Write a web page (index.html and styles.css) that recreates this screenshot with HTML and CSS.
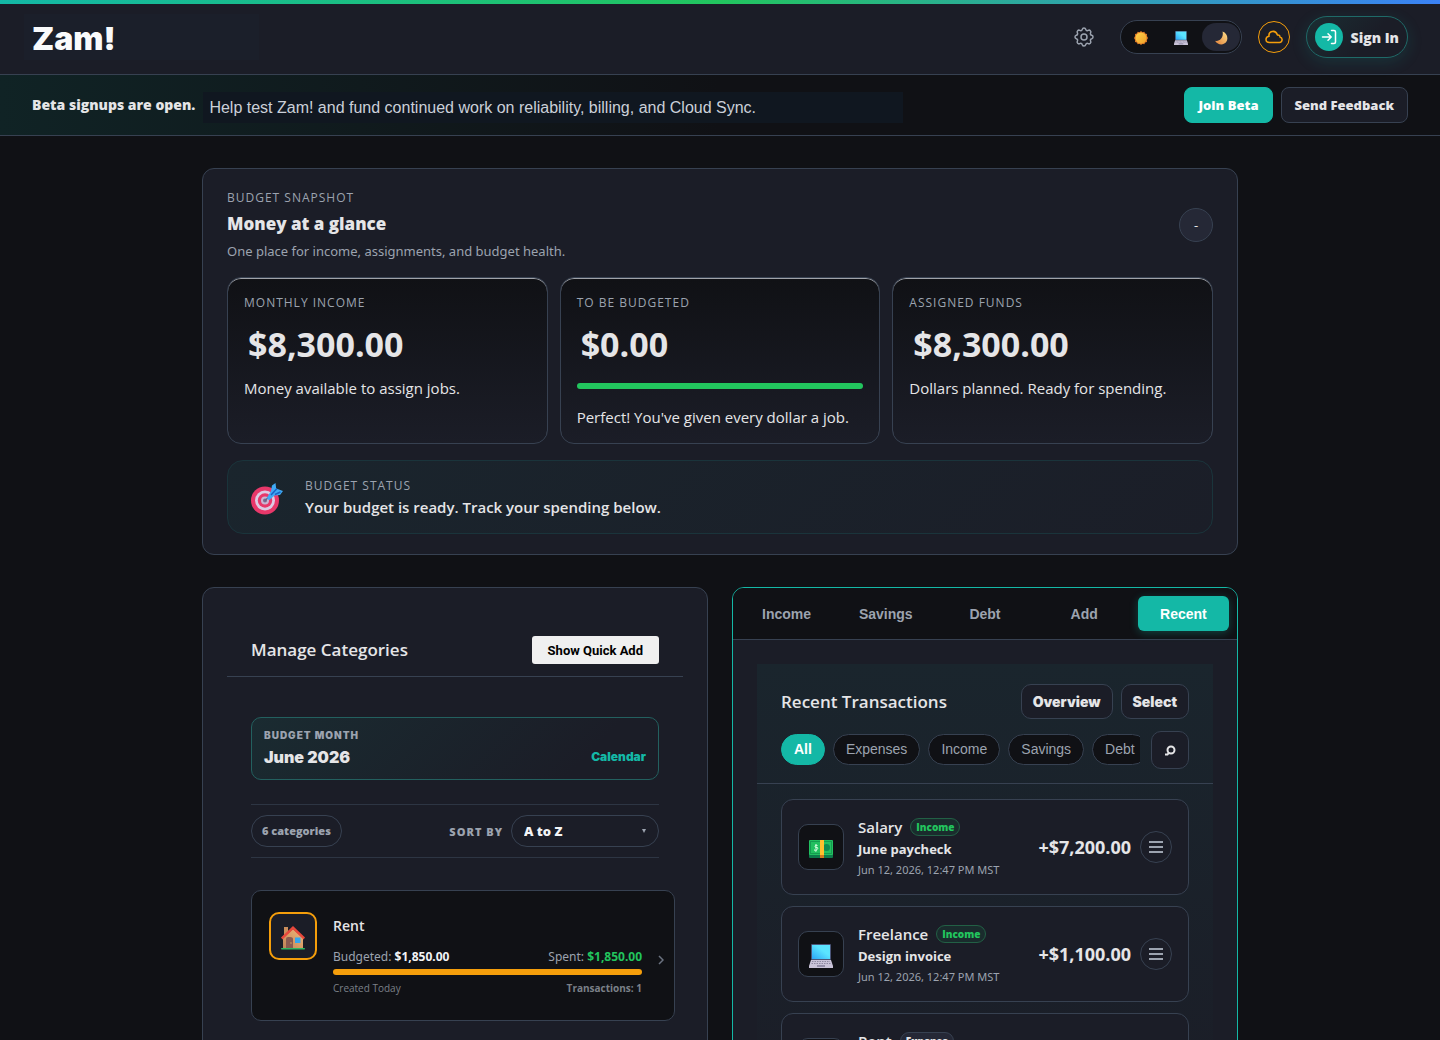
FILE: index.html
```html
<!DOCTYPE html>
<html lang="en">

<head>
    <meta charset="UTF-8">
    <meta name="viewport" content="width=device-width, initial-scale=1.0">
    <title>Zam!</title>
    <link rel="stylesheet" href="styles.css">
</head>

<body>
    <!-- shared icons -->
    <svg class="icon-defs" width="0" height="0" aria-hidden="true">
        <defs>
            <linearGradient id="screenFill" x1="1" y1="0" x2="0" y2="1">
                <stop offset="0.4" stop-color="#5be4ff" />
                <stop offset="1" stop-color="#2ba4f5" />
            </linearGradient>
            <linearGradient id="sunFill" x1="0" y1="0" x2="1" y2="1">
                <stop offset="0" stop-color="#ffd24a" />
                <stop offset="1" stop-color="#f0a028" />
            </linearGradient>
            <linearGradient id="moonFill" x1="1" y1="0" x2="0" y2="1">
                <stop offset="0" stop-color="#ffe08a" />
                <stop offset="1" stop-color="#e0803a" />
            </linearGradient>
            <linearGradient id="wallFill" x1="1" y1="0" x2="0" y2="1">
                <stop offset="0" stop-color="#f0b878" />
                <stop offset="1" stop-color="#c08458" />
            </linearGradient>
            <symbol id="laptop" viewBox="0 0 24 24">
                <rect x="2" y="0" width="20" height="16" rx="1" fill="#4a5578" />
                <rect x="3" y="1" width="18" height="14" fill="url(#screenFill)" />
                <path d="M2 16h20l2 6v2H0v-2z" fill="#c9c3d8" />
                <path d="M3 17.500h18M2.500 19.500h19" stroke="#8d88a0" stroke-width="1" stroke-dasharray="1.500 1" />
                <rect x="8" y="21" width="8" height="2" fill="#938ea8" />
            </symbol>
            <symbol id="house" viewBox="0 0 24 24">
                <rect x="3" y="1" width="4" height="9" fill="#c98e5c" />
                <path d="M2 12 12 3l10 9v10H2z" fill="url(#wallFill)" />
                <path d="M12 0 24 11.500 22.500 13.500 12 3.500 1.500 13.500 0 11.500z" fill="#e8483c" />
                <path d="M5 22v-9q0-2 2-2h2q3 0 3 2v9z" fill="#8b5a50" />
                <circle cx="10" cy="17" r="0.700" fill="#e0b060" />
                <rect x="14" y="11.500" width="5.500" height="5.500" fill="#35a6ee" />
                <rect x="0" y="22" width="24" height="1.500" rx="0.700" fill="#2fb560" />
            </symbol>
            <symbol id="cash" viewBox="0 0 24 18">
                <rect x="0" y="2" width="24" height="16" rx="1" fill="#0c7a4a" />
                <rect x="0" y="0" width="24" height="15" rx="1" fill="#22c060" />
                <rect x="1.500" y="1.500" width="21" height="12" fill="none" stroke="#159c50" />
                <circle cx="17.500" cy="7.500" r="3.500" fill="#0f8a50" />
                <path d="M8.500 5.500q-2.500-1-2.500.700t2 1.400-.200 2.200-2.300-.300M7 4v7.500" fill="none" stroke="#d5ffe0" />
                <rect x="11" y="0" width="4" height="15" fill="#ffc02e" />
                <rect x="11" y="15" width="4" height="3" fill="#d07a20" />
            </symbol>
            <symbol id="menu" viewBox="0 0 14 12">
                <path d="M0.500 1h13M0.500 6h13M0.500 11h13" stroke="currentColor" stroke-width="2" stroke-linecap="round" />
            </symbol>
        </defs>
    </svg>

    <div class="top-stripe"></div>

    <header class="header">
        <div class="brand">Zam!</div>
        <div class="header-actions">
            <button class="settings-button" aria-label="Settings">
                <svg width="24" height="24" viewBox="0 0 24 24" fill="none" stroke="currentColor" stroke-width="1.500" stroke-linejoin="round">
                    <circle cx="12" cy="12" r="3" />
                    <path d="M10.300 4.300c.400-1.750 2.900-1.750 3.400 0a1.700 1.700 0 0 0 2.500 1.100c1.600-.900 3.300.800 2.400 2.400a1.700 1.700 0 0 0 1.100 2.500c1.750.400 1.750 2.900 0 3.400a1.700 1.700 0 0 0-1.100 2.500c.900 1.600-.800 3.300-2.400 2.400a1.700 1.700 0 0 0-2.500 1.100c-.400 1.750-2.900 1.750-3.400 0a1.700 1.700 0 0 0-2.500-1.100c-1.600.900-3.300-.800-2.400-2.400a1.700 1.700 0 0 0-1.100-2.500c-1.750-.400-1.750-2.900 0-3.400a1.700 1.700 0 0 0 1.100-2.500c-.900-1.600.800-3.300 2.400-2.400a1.700 1.700 0 0 0 2.500-1.100z" />
                </svg>
            </button>
            <div class="theme-switch">
                <button aria-label="Light">
                    <svg width="14" height="14" viewBox="0 0 14 14">
                        <path d="M7 0l1.500 1.200L10.300.800l.900 1.700 1.800.600-.100 2L14 7l-1.100 1.900.100 2-1.800.600-.900 1.700-1.800-.400L7 14l-1.500-1.200-1.800.400-.900-1.700L1 10.900l.100-2L0 7l1.100-1.900-.100-2 1.800-.600.900-1.700 1.800.400z" fill="#e07a28" />
                        <circle cx="7" cy="7" r="5.500" fill="url(#sunFill)" />
                    </svg>
                </button>
                <button aria-label="System"><svg width="14" height="14"><use href="#laptop" /></svg></button>
                <button class="selected" aria-label="Dark">
                    <svg width="14" height="14" viewBox="0 0 14 14">
                        <path d="M8.500.500C13 2 14.500 7 12.500 10.500S4.500 15 1 9.800c5 1.200 9-3.800 7.500-9.300z" fill="url(#moonFill)" />
                    </svg>
                </button>
            </div>
            <button class="cloud-button" aria-label="Cloud Sync">
                <svg width="18" height="14" viewBox="0 0 18 14" fill="none" stroke="currentColor" stroke-width="1.500">
                    <path d="M4.500 12.500h10a2.800 2.800 0 0 0 .500-5.500C15 5.500 14 4.800 12.500 5 11.500 2.500 9.500 1 7.300 1.500 5 2 3.700 4 4 6.200 2 6.500 1 8 1 9.500c0 1.700 1.500 3 3.500 3z" />
                </svg>
            </button>
            <button class="sign-in-button">
                <span class="sign-in-icon">
                    <svg width="16" height="16" viewBox="0 0 16 16" fill="none" stroke="currentColor" stroke-width="1.500" stroke-linecap="round" stroke-linejoin="round">
                        <path d="M1.500 8h8.500M7 4.800 10.200 8 7 11.200M10.500 1.500H13q1.500 0 1.500 1.500v10q0 1.500-1.500 1.500h-2.500" />
                    </svg>
                </span>
                Sign In
            </button>
        </div>
    </header>

    <div class="beta-banner">
        <div class="beta-text">
            <strong>Beta signups are open.</strong>
            <span>Help test Zam! and fund continued work on reliability, billing, and Cloud Sync.</span>
        </div>
        <div class="beta-actions">
            <button class="join-button">Join Beta</button>
            <button class="feedback-button">Send Feedback</button>
        </div>
    </div>

    <main class="container">
        <section class="panel snapshot">
            <div class="snapshot-header">
                <div>
                    <div class="eyebrow">Budget Snapshot</div>
                    <h2>Money at a glance</h2>
                    <p>One place for income, assignments, and budget health.</p>
                </div>
                <button class="collapse-button" aria-label="Collapse">-</button>
            </div>

            <div class="stats">
                <div class="stat">
                    <div class="eyebrow">Monthly Income</div>
                    <div class="stat-value">$8,300.00</div>
                    <p>Money available to assign jobs.</p>
                </div>
                <div class="stat">
                    <div class="eyebrow">To Be Budgeted</div>
                    <div class="stat-value">$0.00</div>
                    <div class="stat-bar"></div>
                    <p>Perfect! You've given every dollar a job.</p>
                </div>
                <div class="stat">
                    <div class="eyebrow">Assigned Funds</div>
                    <div class="stat-value">$8,300.00</div>
                    <p>Dollars planned. Ready for spending.</p>
                </div>
            </div>

            <div class="status">
                <svg width="32" height="32" viewBox="0 0 32 32">
                    <circle cx="14" cy="17.500" r="14" fill="#e8386a" />
                    <circle cx="14" cy="17.500" r="10" fill="#dccbe4" />
                    <circle cx="14" cy="17.500" r="7.200" fill="#e8386a" />
                    <circle cx="14" cy="17.500" r="4" fill="#c9b6d4" />
                    <circle cx="14" cy="17.500" r="2" fill="#7c6b92" />
                    <path d="M14 17.500 20 12" stroke="#5a6a90" stroke-width="1.500" />
                    <path d="M16 14.500 20 8l1-5.500L24.500 0l.700 5.500L32 8l-3 4-5.500.500-5 4.500q-2 0-2.500-2.500z" fill="#3fa9f5" />
                    <path d="M20 12l6-6.500M24 11.500l5.500-2.500" stroke="#1b62c4" stroke-width="1.500" />
                </svg>
                <div>
                    <div class="eyebrow">Budget Status</div>
                    <div class="status-text">Your budget is ready. Track your spending below.</div>
                </div>
            </div>
        </section>

        <div class="columns">
            <section class="panel categories">
                <div class="categories-header">
                    <h3>Manage Categories</h3>
                    <button class="quick-add-button">Show Quick Add</button>
                </div>

                <div class="categories-body">
                    <button class="month-button">
                        <span>
                            <span class="month-label">Budget Month</span>
                            <span class="month-name">June 2026</span>
                        </span>
                        <span class="month-link">Calendar</span>
                    </button>

                    <div class="sort-row">
                        <span class="count-pill">6 categories</span>
                        <div class="sort">
                            <label for="sortBy">Sort by</label>
                            <div class="select-wrap">
                                <select id="sortBy">
                                    <option>A to Z</option>
                                    <option>Z to A</option>
                                </select>
                                <svg width="4" height="4" viewBox="0 0 4 4"><path d="M0 0h4L2 4z" fill="#9ca3af" /></svg>
                            </div>
                        </div>
                    </div>

                    <div class="category-card">
                        <div class="category-icon"><svg width="24" height="24"><use href="#house" /></svg></div>
                        <div class="category-info">
                            <h4>Rent</h4>
                            <div class="category-amounts">
                                <span>Budgeted: <b>$1,850.00</b></span>
                                <span>Spent: <b class="green">$1,850.00</b></span>
                            </div>
                            <div class="category-bar"></div>
                            <div class="category-meta">
                                <span>Created Today</span>
                                <b>Transactions: 1</b>
                            </div>
                        </div>
                        <svg class="chevron" width="6" height="10" viewBox="0 0 6 10" fill="none" stroke="currentColor" stroke-width="1.500"><path d="M1 1l4 4-4 4" /></svg>
                    </div>
                </div>
            </section>

            <section class="panel activity">
                <nav class="tabs">
                    <button>Income</button>
                    <button>Savings</button>
                    <button>Debt</button>
                    <button>Add</button>
                    <button class="selected">Recent</button>
                </nav>

                <div class="recent">
                    <div class="recent-header">
                        <div class="recent-title">
                            <h3>Recent Transactions</h3>
                            <div class="recent-actions">
                                <button>Overview</button>
                                <button>Select</button>
                            </div>
                        </div>
                        <div class="filter-row">
                            <div class="chips">
                                <button class="selected">All</button>
                                <button>Expenses</button>
                                <button>Income</button>
                                <button>Savings</button>
                                <button>Debt</button>
                            </div>
                            <button class="search-button" aria-label="Search">
                                <svg width="12" height="12" viewBox="0 0 12 12" fill="none" stroke="currentColor" stroke-width="2">
                                    <circle cx="7" cy="6" r="3.500" />
                                    <path d="M5 8.500 3.500 10.500H1" />
                                </svg>
                            </button>
                        </div>
                    </div>

                    <div class="transactions">
                        <div class="transaction">
                            <div class="transaction-icon"><svg width="24" height="18"><use href="#cash" /></svg></div>
                            <div class="transaction-info">
                                <div class="transaction-name">Salary <span class="badge income">Income</span></div>
                                <div class="transaction-note">June paycheck</div>
                                <div class="transaction-date">Jun 12, 2026, 12:47 PM MST</div>
                            </div>
                            <div class="amount">+$7,200.00</div>
                            <button class="menu-button" aria-label="Actions"><svg width="14" height="12"><use href="#menu" /></svg></button>
                        </div>
                        <div class="transaction">
                            <div class="transaction-icon"><svg width="24" height="24"><use href="#laptop" /></svg></div>
                            <div class="transaction-info">
                                <div class="transaction-name">Freelance <span class="badge income">Income</span></div>
                                <div class="transaction-note">Design invoice</div>
                                <div class="transaction-date">Jun 12, 2026, 12:47 PM MST</div>
                            </div>
                            <div class="amount">+$1,100.00</div>
                            <button class="menu-button" aria-label="Actions"><svg width="14" height="12"><use href="#menu" /></svg></button>
                        </div>
                        <div class="transaction">
                            <div class="transaction-icon"><svg width="24" height="24"><use href="#house" /></svg></div>
                            <div class="transaction-info">
                                <div class="transaction-name">Rent <span class="badge">Expense</span></div>
                                <div class="transaction-note">June rent</div>
                                <div class="transaction-date">Jun 12, 2026, 12:47 PM MST</div>
                            </div>
                            <div class="amount">-$1,850.00</div>
                            <button class="menu-button" aria-label="Actions"><svg width="14" height="12"><use href="#menu" /></svg></button>
                        </div>
                    </div>
                </div>
            </section>
        </div>
    </main>
</body>

</html>
```
FILE: styles.css
```css
* {
    box-sizing: border-box;
}

html {
    scrollbar-width: none;
}

body {
    margin: 0;
    background-color: #101115;
    color: #e5e5e7;
    font-family: 'Open Sans', 'Noto Sans', sans-serif;
    font-size: 15px;
}

h2,
h3,
h4,
p {
    margin: 0;
}

button {
    font-family: inherit;
    color: inherit;
    margin: 0;
    padding: 0;
    cursor: pointer;
}

svg {
    display: block;
    flex: none;
}

.icon-defs {
    position: absolute;
}

.top-stripe {
    position: absolute;
    top: 0;
    left: 0;
    right: 0;
    height: 4px;
    background: linear-gradient(90deg, #14b8a6, #22c55e, #3b82f6);
}

/* Header */
.header {
    display: flex;
    justify-content: space-between;
    align-items: center;
    padding: 16px 32px 16px 24px;
    background-color: #1b1d27;
    border-bottom: 1px solid #374151;
}

.brand {
    width: 235px;
    padding: 4px 8px 0;
    background-color: #1b1f2a;
    color: #f9fafb;
    font-family: Inter, sans-serif;
    font-size: 32px;
    font-weight: 900;
    line-height: 42px;
    margin: -2px 0;
}

.header-actions {
    display: flex;
    align-items: center;
    gap: 16px;
}

.settings-button {
    display: flex;
    justify-content: center;
    align-items: center;
    width: 40px;
    height: 40px;
    background: none;
    border: none;
    color: #9ca3af;
}

.theme-switch {
    display: flex;
    gap: 2px;
    padding: 2px 1px;
    background-color: #101115;
    border: 1px solid #374151;
    border-radius: 17px;
}

.theme-switch button {
    display: flex;
    justify-content: center;
    align-items: center;
    width: 38px;
    height: 28px;
    padding-top: 2px;
    background: none;
    border: none;
    border-radius: 14px;
}

.theme-switch .selected {
    background-color: #252836;
}

.cloud-button {
    display: flex;
    justify-content: center;
    align-items: center;
    width: 32px;
    height: 32px;
    background: none;
    border: 1px solid #f59e0b;
    border-radius: 50%;
    color: #f59e0b;
}

.sign-in-button {
    display: flex;
    align-items: center;
    gap: 8px;
    height: 42px;
    padding: 0 8px;
    background: linear-gradient(135deg, #1a2e33, #1b1d27 60%);
    border: 1px solid #1f6a68;
    border-radius: 21px;
    box-shadow: 0 4px 16px rgba(20, 184, 166, 0.15);
    font-size: 14px;
    font-weight: 800;
}

.sign-in-icon {
    display: flex;
    justify-content: center;
    align-items: center;
    width: 28px;
    height: 28px;
    background-color: #14b8a6;
    border-radius: 50%;
    color: #fff;
}

/* Beta banner */
.beta-banner {
    display: flex;
    justify-content: space-between;
    align-items: flex-end;
    padding: 12px 32px;
    background: linear-gradient(90deg, #102325, #101115 50%);
    border-bottom: 1px solid #374151;
}

.beta-text {
    display: flex;
    gap: 8px;
}

.beta-text strong {
    font-size: 14px;
    font-weight: 800;
    line-height: 26px;
}

.beta-text span {
    width: 700px;
    padding: 0 6px;
    background-color: #101720;
    color: #cbd0d9;
    font-family: 'Liberation Sans', Arial, sans-serif;
    font-size: 16px;
    line-height: 31px;
}

.beta-actions {
    display: flex;
    gap: 8px;
}

.beta-actions button {
    height: 36px;
    padding: 0 13px;
    border-radius: 8px;
    font-size: 13px;
    font-weight: 800;
}

.join-button {
    background-color: #14b8a6;
    border: 1px solid #14b8a6;
    color: #fff;
}

.feedback-button {
    background-color: #1b1d27;
    border: 1px solid #374151;
}

/* Layout */
.container {
    max-width: 1100px;
    margin: 0 auto;
    padding: 32px;
}

.panel {
    background-color: #1b1d27;
    border: 1px solid #374151;
    border-radius: 12px;
}

.eyebrow {
    color: #9ca3af;
    font-size: 12px;
    line-height: 18px;
    letter-spacing: 1px;
    text-transform: uppercase;
}

/* Snapshot */
.snapshot {
    padding: 20px 24px;
}

.snapshot-header {
    display: flex;
    justify-content: space-between;
    align-items: center;
}

.snapshot-header h2 {
    margin: 3px 0;
    font-size: 17px;
    font-weight: 800;
    line-height: 28px;
}

.snapshot-header p {
    color: #9ca3af;
    font-family: 'Noto Sans', sans-serif;
    font-size: 13px;
    line-height: 20px;
}

.collapse-button {
    width: 34px;
    height: 34px;
    background-color: #252836;
    border: 1px solid #374151;
    border-radius: 50%;
    font-size: 13px;
}

.stats {
    display: grid;
    grid-template-columns: repeat(3, 1fr);
    gap: 12px;
    margin: 16px 0;
}

.stat {
    padding: 16px 16px 15px;
    background: linear-gradient(180deg, #101115, #1b1d27);
    border: 1px solid #374151;
    border-radius: 14px;
    box-shadow: inset 0 1px 0 #a0a2a8;
}

.stat-value {
    padding: 0 4px;
    margin: 10px 0 11px;
    font-size: 34px;
    font-weight: 700;
    line-height: 44px;
}

.stat-bar {
    height: 6px;
    margin: 17px 0;
    background-color: #22c55e;
    border-radius: 3px;
}

.stat p {
    line-height: 22px;
}

.status {
    display: flex;
    align-items: center;
    gap: 22px;
    padding: 16px 23px;
    background: linear-gradient(135deg, #1a252d, #1b1e28);
    border: 1px solid #1a343b;
    border-radius: 16px;
}

.status svg {
    margin-top: 4px;
}

.status-text {
    margin-top: 2px;
    font-weight: 600;
    line-height: 20px;
}

/* Columns */
.columns {
    display: grid;
    grid-template-columns: repeat(2, minmax(0, 1fr));
    gap: 24px;
    margin-top: 32px;
}

h3 {
    font-size: 17px;
    font-weight: 600;
    line-height: 28px;
}

/* Categories */
.categories {
    padding: 24px;
}

.categories-header {
    display: flex;
    justify-content: space-between;
    align-items: center;
    padding: 24px 24px 12px;
    border-bottom: 1px solid #374151;
}

.quick-add-button {
    height: 28px;
    padding: 0 16px;
    background-color: #f0f0f0;
    border: none;
    border-radius: 3px;
    color: #000;
    font-family: Roboto, sans-serif;
    font-size: 13px;
    font-weight: 700;
}

.categories-body {
    padding: 40px 24px;
}

.month-button {
    display: flex;
    justify-content: space-between;
    align-items: flex-end;
    width: 100%;
    padding: 10px 12px;
    background: linear-gradient(135deg, #1a2b31, #1b1d27 80%);
    border: 1px solid #23605f;
    border-radius: 10px;
    font-family: Inter, sans-serif;
    text-align: left;
}

.month-label {
    display: block;
    color: #9ca3af;
    font-size: 10px;
    font-weight: 900;
    line-height: 15px;
    letter-spacing: 1px;
    text-transform: uppercase;
}

.month-name {
    display: block;
    margin-top: 2px;
    font-size: 16px;
    font-weight: 900;
    line-height: 24px;
}

.month-link {
    color: #14b8a6;
    font-size: 12px;
    font-weight: 900;
    line-height: 24px;
}

.sort-row {
    display: flex;
    justify-content: space-between;
    align-items: center;
    margin: 24px 0 32px;
    padding: 10px 0;
    border-top: 1px solid #2d3543;
    border-bottom: 1px solid #2d3543;
}

.count-pill {
    padding: 0 10px;
    border: 1px solid #374151;
    border-radius: 16px;
    color: #9ca3af;
    font-size: 11px;
    font-weight: 800;
    line-height: 30px;
}

.sort {
    display: flex;
    align-items: center;
    gap: 8px;
}

.sort label {
    color: #9ca3af;
    font-size: 11px;
    font-weight: 800;
    letter-spacing: 1px;
    text-transform: uppercase;
}

.select-wrap {
    position: relative;
}

.select-wrap select {
    appearance: none;
    width: 148px;
    height: 32px;
    padding: 0 12px;
    background: none;
    border: 1px solid #374151;
    border-radius: 16px;
    color: #f3f4f6;
    font-family: inherit;
    font-size: 13px;
    font-weight: 800;
}

.select-wrap svg {
    position: absolute;
    right: 13px;
    top: 14px;
    pointer-events: none;
}

.category-card {
    display: flex;
    gap: 16px;
    margin-right: -16px;
    padding: 21px 10px 24px 17px;
    background-color: #101115;
    border: 1px solid #374151;
    border-radius: 10px;
}

.category-icon {
    display: flex;
    justify-content: center;
    align-items: center;
    flex: none;
    width: 48px;
    height: 48px;
    padding-top: 4px;
    background-color: #1b1d27;
    border: 2px solid #f59e0b;
    border-radius: 10px;
}

.category-info {
    flex: 1;
}

.category-info h4 {
    margin: 4px 0 11px;
    font-size: 14px;
    font-weight: 600;
    line-height: 20px;
}

.category-amounts {
    display: flex;
    justify-content: space-between;
    color: #9ca3af;
    font-family: 'Noto Sans', sans-serif;
    font-size: 12px;
    line-height: 20px;
}

.category-amounts b {
    color: #f3f4f6;
}

.category-amounts .green {
    color: #22c55e;
}

.category-bar {
    height: 6px;
    margin: 2px 0 5px;
    background-color: #f59e0b;
    border-radius: 3px;
}

.category-meta {
    display: flex;
    justify-content: space-between;
    color: #7b8088;
    font-size: 10px;
    line-height: 16px;
}

.chevron {
    align-self: center;
    margin-top: 12px;
    color: #6b7280;
}

/* Activity */
.activity {
    border-color: #14b8a6;
    overflow: hidden;
}

.tabs {
    display: grid;
    grid-template-columns: repeat(5, 1fr);
    gap: 8px;
    padding: 8px;
    background-color: #101115;
    border-bottom: 1px solid #374151;
}

.tabs button {
    height: 35px;
    background: none;
    border: none;
    border-radius: 6px;
    color: #9ca3af;
    font-family: 'Liberation Sans', Arial, sans-serif;
    font-size: 14px;
    font-weight: 700;
}

.tabs .selected {
    background-color: #14b8a6;
    color: #fff;
    box-shadow: 0 2px 8px rgba(20, 184, 166, 0.3);
}

.recent {
    margin: 24px;
    background: linear-gradient(180deg, #1a252d, #1b1d27);
}

.recent-header {
    padding: 20px 24px 14px;
    border-bottom: 1px solid #374151;
}

.recent-title {
    display: flex;
    justify-content: space-between;
    align-items: center;
}

.recent-actions {
    display: flex;
    gap: 8px;
}

.recent-actions button {
    height: 35px;
    padding: 0 11px;
    background-color: #1b1d27;
    border: 1px solid #374151;
    border-radius: 10px;
    font-family: Inter, sans-serif;
    font-size: 14px;
    font-weight: 900;
}

.filter-row {
    display: flex;
    align-items: center;
    gap: 11px;
    margin-top: 12px;
}

.chips {
    display: flex;
    gap: 8px;
    flex: 1;
    min-width: 0;
    margin-bottom: 1px;
    overflow: hidden;
}

.chips button {
    flex: none;
    height: 31px;
    padding: 0 12px 2px;
    background-color: #101115;
    border: 1px solid #374151;
    border-radius: 16px;
    color: #9ca3af;
    font-family: 'Liberation Sans', Arial, sans-serif;
    font-size: 14px;
}

.chips .selected {
    background-color: #14b8a6;
    border-color: #14b8a6;
    color: #fff;
    font-weight: 700;
}

.search-button {
    display: flex;
    justify-content: center;
    align-items: center;
    flex: none;
    width: 38px;
    height: 38px;
    background-color: #1b1d27;
    border: 1px solid #374151;
    border-radius: 10px;
}

.transactions {
    display: flex;
    flex-direction: column;
    gap: 11px;
    padding: 15px 24px;
}

.transaction {
    display: flex;
    align-items: center;
    height: 96px;
    padding: 0 16px;
    background-color: #1b1d27;
    border: 1px solid #374151;
    border-radius: 12px;
}

.transaction-icon {
    display: flex;
    justify-content: center;
    align-items: center;
    width: 46px;
    height: 46px;
    margin-right: 14px;
    padding-top: 4px;
    background-color: #101115;
    border: 1px solid #374151;
    border-radius: 10px;
}

.transaction-info {
    flex: 1;
    padding-top: 2px;
}

.transaction-name {
    display: flex;
    align-items: center;
    gap: 8px;
    font-weight: 600;
    line-height: 22px;
}

.badge {
    padding: 0 5px;
    background-color: #252836;
    border: 1px solid #374151;
    border-radius: 9px;
    font-size: 10px;
    font-weight: 800;
    line-height: 16px;
}

.badge.income {
    background-color: #1a2c2d;
    border-color: #226045;
    color: #22c55e;
}

.transaction-note {
    font-size: 13px;
    font-weight: 700;
    line-height: 22px;
}

.transaction-date {
    color: #9ca3af;
    font-family: 'Noto Sans', sans-serif;
    font-size: 11px;
    line-height: 20px;
}

.amount {
    font-size: 18px;
    font-weight: 700;
}

.menu-button {
    display: flex;
    justify-content: center;
    align-items: center;
    width: 32px;
    height: 32px;
    margin-left: 9px;
    background: none;
    border: 1px solid #374151;
    border-radius: 50%;
    color: #9ca3af;
}
```
